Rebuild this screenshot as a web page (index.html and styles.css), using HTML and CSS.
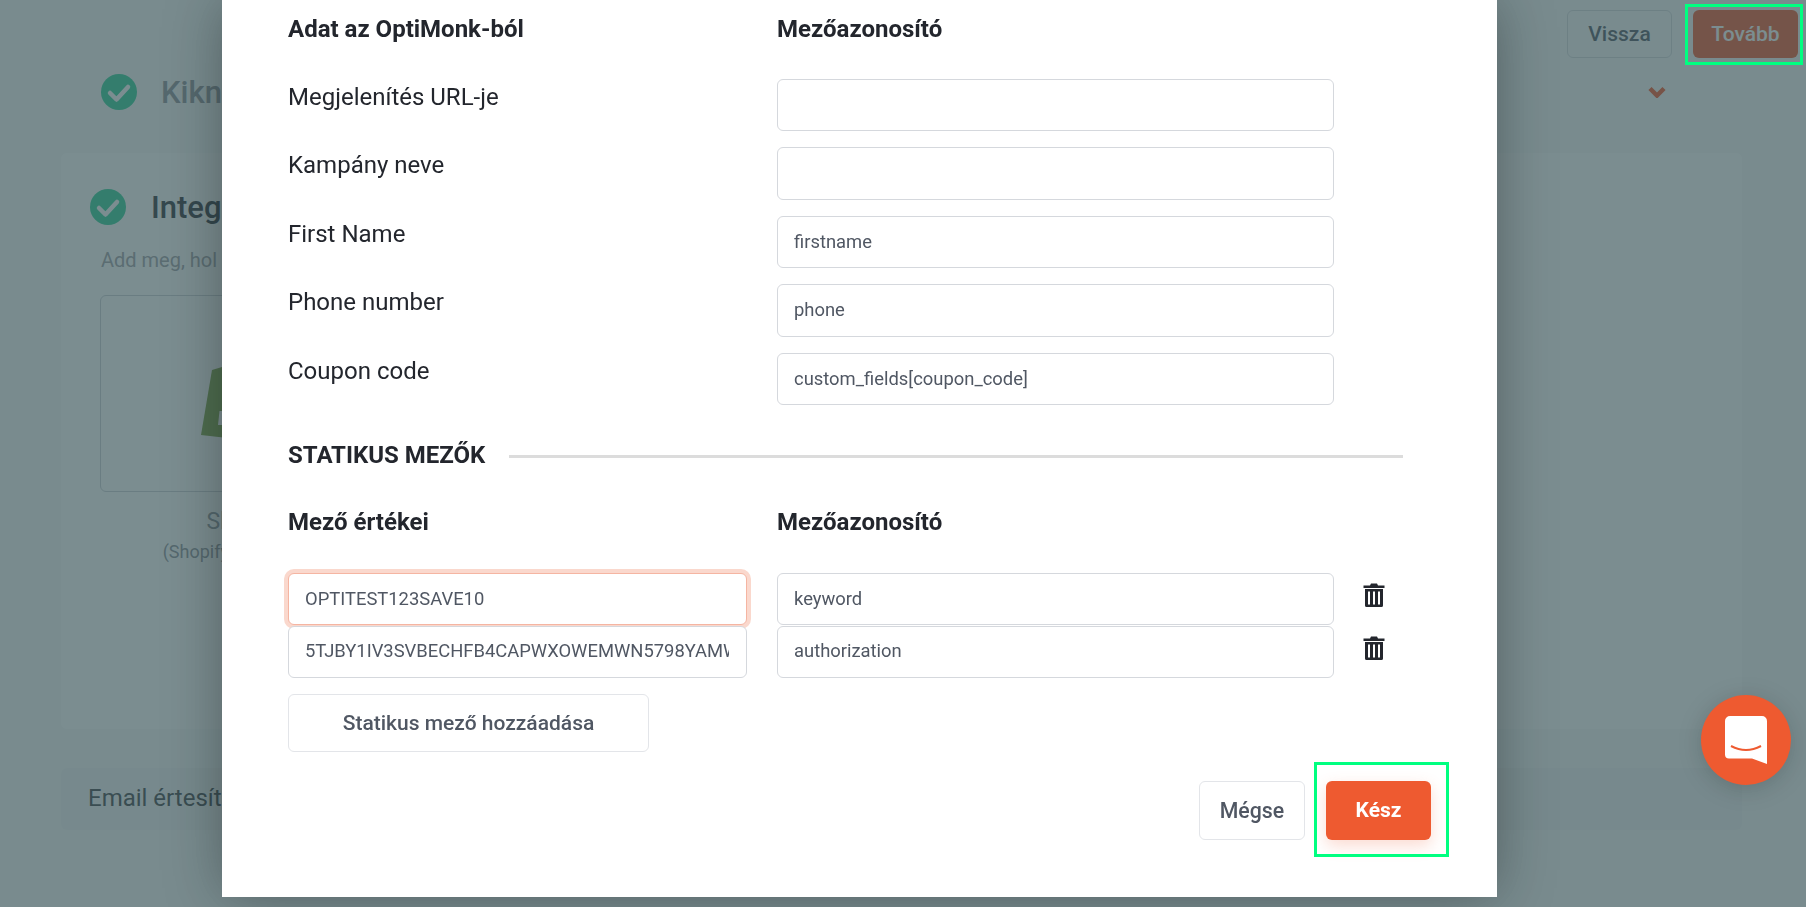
FILE: index.html
```html
<!DOCTYPE html>
<html lang="hu">
<head>
<meta charset="utf-8">
<title>Integráció</title>
<link rel="stylesheet" href="styles.css">
</head>
<body>
<div class="page">
  <header class="top">
    <button class="btn btn-ghost">Vissza</button>
    <button class="btn btn-primary">Tovább</button>
  </header>
  <div class="step">
    <svg class="check" viewBox="0 0 36 36"><circle cx="18" cy="18" r="18" fill="#30cf98"/><path d="M9 19l6.500 6.500L27 13" fill="none" stroke="#fff" stroke-width="4.500" stroke-linecap="round" stroke-linejoin="round"/></svg>
    <span class="step-title">Kiknek</span>
    <svg class="chevron" viewBox="0 0 18 12"><path d="M2 2.500L9 9.500l7-7" fill="none" stroke="#f2562a" stroke-width="4.500"/></svg>
  </div>
  <section class="panel">
    <div class="panel-head">
      <svg class="check" viewBox="0 0 36 36"><circle cx="18" cy="18" r="18" fill="#30cf98"/><path d="M9 19l6.500 6.500L27 13" fill="none" stroke="#fff" stroke-width="4.500" stroke-linecap="round" stroke-linejoin="round"/></svg>
      <span class="panel-title">Integráció</span>
    </div>
    <p class="panel-sub">Add meg, hol</p>
    <div class="tile">
      <svg class="shopify" viewBox="0 0 70 76"><path d="M11 3L21 0h49v76L0 68z" fill="#7ea243"/><path d="M18.500 44H33v14H17z" fill="#fff"/></svg>
    </div>
    <div class="tile-name">Shopify</div>
    <div class="tile-note">(Shopify webáruház)</div>
  </section>
  <div class="email-row">Email értesítés</div>
</div>

<div class="overlay">
  <main class="modal">
    <div class="grid-head">
      <div>Adat az OptiMonk-ból</div>
      <div>Mezőazonosító</div>
    </div>
    <div class="map-rows">
      <label class="map-label">Megjelenítés URL-je</label><input class="field" value="">
      <label class="map-label">Kampány neve</label><input class="field" value="">
      <label class="map-label">First Name</label><input class="field" value="firstname">
      <label class="map-label">Phone number</label><input class="field" value="phone">
      <label class="map-label">Coupon code</label><input class="field" value="custom_fields[coupon_code]">
    </div>
    <div class="section">
      <span>STATIKUS MEZŐK</span>
      <i class="section-line"></i>
    </div>
    <div class="grid-head static-head">
      <div>Mező értékei</div>
      <div>Mezőazonosító</div>
    </div>
    <div class="static-row">
      <input class="field field-focus" value="OPTITEST123SAVE10">
      <input class="field" value="keyword">
      <svg class="trash" viewBox="0 0 22 24"><path d="M8 .500h6l1 2h6.500V5H.500V2.500H7z" fill="#23262d"/><path fill-rule="evenodd" d="M2 6h18v16.500a1.500 1.500 0 0 1-1.500 1.500h-15A1.500 1.500 0 0 1 2 22.500zM5 8.500v13h2v-13zm5 0v13h2v-13zm5 0v13h2v-13z" fill="#23262d"/></svg>
    </div>
    <div class="static-row">
      <input class="field" value="5TJBY1IV3SVBECHFB4CAPWXOWEMWN5798YAMWQZK">
      <input class="field" value="authorization">
      <svg class="trash" viewBox="0 0 22 24"><path d="M8 .500h6l1 2h6.500V5H.500V2.500H7z" fill="#23262d"/><path fill-rule="evenodd" d="M2 6h18v16.500a1.500 1.500 0 0 1-1.500 1.500h-15A1.500 1.500 0 0 1 2 22.500zM5 8.500v13h2v-13zm5 0v13h2v-13zm5 0v13h2v-13z" fill="#23262d"/></svg>
    </div>
    <button class="btn-add">Statikus mező hozzáadása</button>
    <footer class="modal-foot">
      <button class="btn btn-cancel">Mégse</button>
      <div class="marked">
        <button class="btn btn-primary btn-done">Kész</button>
        <span class="mark"></span>
      </div>
    </footer>
  </main>
  <div class="next-mark"></div>
  <button class="chat" aria-label="Chat">
    <svg viewBox="0 0 42 48" class="chat-icon"><path d="M5 0h32a5 5 0 0 1 5 5v43l-15-5.500H4a4 4 0 0 1-4-4V5a5 5 0 0 1 5-5z" fill="#fff"/><path d="M6 30q15 8 30 0" fill="none" stroke="#ee5a30" stroke-width="2"/></svg>
  </button>
</div>
</body>
</html>
```
FILE: styles.css
```css
* { box-sizing: border-box; }
html, body { margin: 0; height: 100%; overflow: hidden; }
body { background: #f9fafa; font-family: Roboto, "Liberation Sans", sans-serif; color: #23262d; }

.page { height: 907px; }
.top { display: flex; justify-content: flex-end; gap: 21px; padding: 10px 8px 0 0; }
.btn { width: 105px; height: 48px; border-radius: 6px; font: 500 21px Roboto, sans-serif; padding: 0; }
.btn-ghost { background: transparent; border: 1px solid #d5d8dd; color: #505763; }
.btn-primary { background: #ee5a30; border: 0; color: #fff; }

.step { display: flex; align-items: center; height: 36px; margin-top: 16px; padding: 0 140px 0 101px; }
.check { width: 36px; height: 36px; flex: none; }
.step-title { margin-left: 24px; font-size: 31px; font-weight: 500; color: #90939b; }
.chevron { width: 18px; height: 12px; margin-left: auto; }

.panel { height: 576px; margin: 43px 64px 0 61px; padding: 36px 0 0 29px; background: #fff; border-radius: 6px; }
.panel-head { display: flex; align-items: center; height: 36px; }
.panel-title { margin-left: 25px; font-size: 31px; font-weight: 500; color: #32353e; }
.panel-sub { margin: 23px 0 0 11px; font-size: 20px; line-height: 24px; color: #a0a0a7; }
.tile { position: relative; width: 290px; height: 197px; margin: 23px 0 0 10px; border: 1px solid #cdd0d6; border-radius: 6px; }
.shopify { position: absolute; left: 100px; top: 71px; width: 70px; height: 76px; }
.tile-name { width: 290px; margin: 15px 0 0 10px; text-align: center; font-size: 23px; line-height: 30px; color: #8f939b; }
.tile-note { width: 290px; margin: 3px 0 0 10px; text-align: center; font-size: 18px; line-height: 24px; color: #8f939b; }

.email-row { height: 62px; margin: 39px 64px 0 61px; padding-left: 27px; background: #f3f4f5; border-radius: 6px; font-size: 24px; line-height: 60px; color: #41444a; }

.overlay { position: fixed; inset: 0; background: rgba(55, 82, 87, .66); }
.modal { position: absolute; left: 222px; top: 0; width: 1275px; height: 897px; padding: 0 66px; background: #fff; box-shadow: 0 0 55px rgba(0, 0, 0, .33); }

.grid-head { display: grid; grid-template-columns: 489px 557px; height: 58px; margin-bottom: 21px; font-size: 24px; font-weight: 700; line-height: 58px; color: #23262d; }
.map-rows { display: grid; grid-template-columns: 489px 557px; grid-auto-rows: 52.400px; row-gap: 16.100px; }
.map-label { font-size: 24px; line-height: 36px; color: #23262d; }

.field { width: 100%; height: 52.400px; padding: 0 17px 2px 16px; border: 1px solid #d5d8dd; border-radius: 6px; background: #fff; font: 400 18.400px Roboto, sans-serif; color: #505763; outline: 0; }
.field-focus { border-color: #f5b5a2; box-shadow: 0 0 0 4px #fad8cd; }

.section { display: flex; align-items: center; gap: 24px; height: 30px; margin-top: 34.600px; font-size: 24px; font-weight: 700; color: #23262d; }
.section-line { width: 894px; height: 3px; margin-top: 4px; background: #dcdcdc; }

.static-head { height: 30px; line-height: 30px; margin: 37px 0 36px; }
.static-row { display: grid; grid-template-columns: 459px 557px 22px; column-gap: 30px; margin-bottom: .400px; }
.static-row .trash { margin: 10px 0 0 -1px; }
.trash { width: 22px; height: 24px; }

.btn-add { display: block; width: 361px; height: 58px; margin-top: 15.500px; border: 1px solid #e3e5e9; border-radius: 6px; background: #fff; font: 500 21px Roboto, sans-serif; color: #505763; padding: 0; }

.modal-foot { display: flex; justify-content: flex-end; gap: 21px; margin-top: 29px; }
.btn-cancel { width: 106px; height: 59px; background: #fff; border: 1px solid #e3e5e9; color: #505763; font-size: 21.300px; }
.marked { position: relative; }
.btn-done { height: 59px; font-weight: 700; box-shadow: 0 6px 16px rgba(238, 90, 48, .22); }
.mark { position: absolute; left: -12px; top: -19px; width: 135px; height: 95px; border: 3px solid #00ff80; }
.next-mark { position: absolute; left: 1685px; top: 4px; width: 118px; height: 61px; border: 3px solid #00ff80; }

.chat { position: absolute; left: 1701px; top: 695px; display: flex; align-items: center; justify-content: center; width: 90px; height: 90px; padding: 0; border: 0; border-radius: 50%; background: #ee5a30; box-shadow: 0 4px 24px rgba(0, 0, 0, .18); }
.chat-icon { width: 42px; height: 48px; }
```
